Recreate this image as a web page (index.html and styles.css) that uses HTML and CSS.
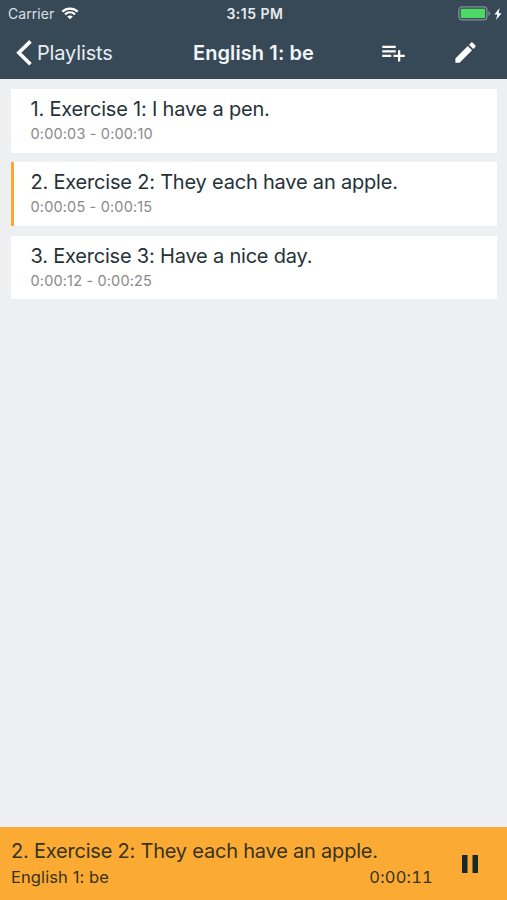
FILE: index.html
```html
<!DOCTYPE html>
<html lang="en">
<head>
<meta charset="utf-8">
<title>English 1: be</title>
<link rel="stylesheet" href="styles.css">
</head>
<body>
<div class="app">
  <header class="header">
    <div class="status">
      <div class="carrier">
        <span class="carrier-name">Carrier</span>
        <svg class="wifi" width="18" height="13" viewBox="0 0 18 13" fill="none" stroke="#fff" stroke-width="2.2"><path d="M1.3 4.6C5.6.5 12.4.5 16.7 4.6M4 7.4c2.9-2.6 7.1-2.6 10 0"/><path d="M9 12.3 6.2 9.5c1.6-1.4 4-1.4 5.6 0z" fill="#fff" stroke="none"/></svg>
      </div>
      <span class="clock">3:15 PM</span>
      <div class="power">
        <svg width="33" height="15" viewBox="0 0 33 15"><rect x=".9" y=".9" width="28" height="13" rx="3.2" fill="none" stroke="#84919a" stroke-width="1.3"/><path d="M30.5 5v5c2-.8 2-4.2 0-5z" fill="#84919a"/><rect x="2.7" y="2.7" width="24.4" height="9.4" rx="1.2" fill="#4cd964"/></svg>
        <svg width="8" height="12" viewBox="0 0 8 12"><path d="M5.6 0 .4 6.6h3L2 12l5.6-6.8h-3z" fill="#fff"/></svg>
      </div>
    </div>
    <nav class="nav">
      <a class="back">
        <svg width="18" height="28" viewBox="0 0 18 28" fill="none" stroke="#fff" stroke-width="3.6"><path d="M16.5 2.4 4.8 13.8l11.7 11.4"/></svg>
        <span class="back-label">Playlists</span>
      </a>
      <h1 class="title">English 1: be</h1>
      <div class="actions">
        <svg width="27" height="27" viewBox="0 0 24 24" fill="#fff"><path d="M14 10H2v2h12v-2zm0-4H2v2h12V6zm4 8v-4h-2v4h-4v2h4v4h2v-4h4v-2h-4zM2 16h8v-2H2v2z"/></svg>
        <svg width="27" height="27" viewBox="0 0 24 24" fill="#fff"><path d="M3 17.25V21h3.75L17.81 9.94l-3.75-3.75L3 17.25zM20.71 7.04c.39-.39.39-1.02 0-1.41l-2.34-2.34c-.39-.39-1.02-.39-1.41 0l-1.83 1.83 3.75 3.75 1.83-1.83z"/></svg>
      </div>
    </nav>
  </header>
  <main class="list">
    <article class="card"><div class="name">1. Exercise 1: I have a pen.</div><div class="range">0:00:03 - 0:00:10</div></article>
    <article class="card active"><div class="name">2. Exercise 2: They each have an apple.</div><div class="range">0:00:05 - 0:00:15</div></article>
    <article class="card"><div class="name">3. Exercise 3: Have a nice day.</div><div class="range">0:00:12 - 0:00:25</div></article>
  </main>
  <footer class="player">
    <div class="track">
      <div class="name">2. Exercise 2: They each have an apple.</div>
      <div class="meta"><span class="playlist">English 1: be</span><span class="time">0:00:11</span></div>
    </div>
    <svg class="pause" width="16" height="18" viewBox="0 0 16 18" fill="#1b2926"><path d="M0 0h5.5v18H0zM10.5 0H16v18h-5.5z"/></svg>
  </footer>
</div>
</body>
</html>
```

FILE: styles.css
```css
* { box-sizing: border-box; }
body {
  margin: 0;
  background: #edeff1;
  font-family: Inter, "Liberation Sans", sans-serif;
  color: #263238;
}
svg { display: block; flex: none; }
.app { height: 900px; display: flex; flex-direction: column; white-space: nowrap; }
.header { height: 79px; background: #374956; color: #fff; }
.status {
  height: 27px;
  display: grid;
  grid-template-columns: 1fr auto 1fr;
  align-items: center;
  padding: 0 5px 0 8px;
}
.carrier { display: flex; align-items: center; gap: 7px; }
.carrier-name { font-size: 14px; color: #dbe1e5; letter-spacing: 0.05px; }
.clock { font-size: 14px; font-weight: 600; color: #e8ecef; letter-spacing: 0.5px; }
.power { display: flex; align-items: center; justify-content: flex-end; gap: 3px; }
.nav {
  height: 51px;
  display: grid;
  grid-template-columns: 1fr auto 1fr;
  align-items: center;
  padding: 0 14px;
}
.back { display: flex; align-items: center; gap: 5px; }
.back-label { font-size: 20px; letter-spacing: -0.15px; color: #e5edf3; }
.title { margin: 0; font-size: 20px; font-weight: 600; letter-spacing: 0.1px; color: #f0f6fa; }
.actions { display: flex; justify-content: flex-end; gap: 45px; padding-right: 14px; }
.list {
  flex: 1;
  display: flex;
  flex-direction: column;
  gap: 9.8px;
  padding: 10px 10px 0 11px;
}
.card { height: 63.5px; background: #fff; padding: 7px 16px 0 19.5px; }
.active { border-left: 3px solid #f9a832; padding-left: 16.5px; }
.name { font-size: 20px; line-height: 26px; letter-spacing: -0.21px; }
.card .name { letter-spacing: -0.2px; }
.range { font-size: 14.5px; line-height: 23px; color: #8a8a8a; letter-spacing: 0.16px; }
.player {
  height: 73px;
  background: #fbab34;
  color: #37331c;
  display: flex;
  align-items: center;
  justify-content: space-between;
  padding: 0 29px 0 11px;
}
.track { width: 422px; }
.meta { display: flex; justify-content: space-between; font-size: 16.5px; line-height: 26px; }
.playlist { letter-spacing: 0.1px; }
.time { font-variant-numeric: tabular-nums; letter-spacing: 0.2px; }
```
